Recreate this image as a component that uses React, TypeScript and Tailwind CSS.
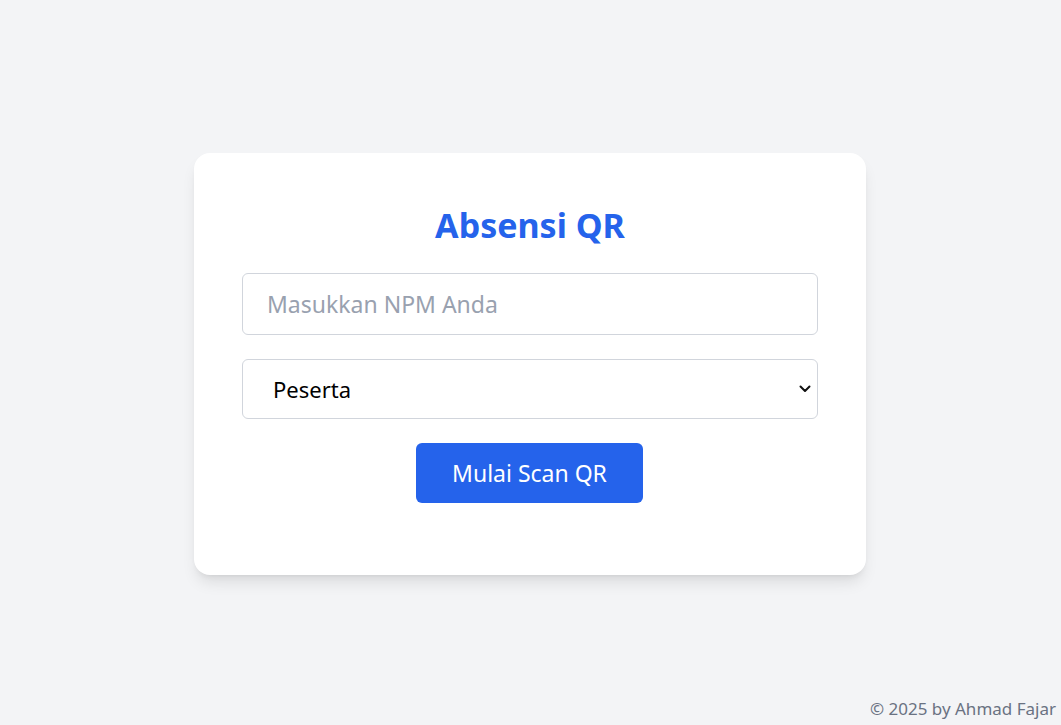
import React from "react";

function App() {
  return (
    <div className="relative min-h-screen bg-gray-100 flex items-center justify-center pt-[3px] pr-px font-['Noto_Sans',sans-serif]">
      <div className="w-[672px] bg-white rounded-2xl shadow-lg px-12 pt-12 pb-[72px] flex flex-col">
        <h1 className="text-[34px] font-bold text-[#2563eb] text-center leading-[40px] pt-1 mb-7">Absensi QR</h1>
        <input
          type="text"
          placeholder="Masukkan NPM Anda"
          className="w-full border border-gray-300 rounded-md px-6 h-[62px] text-[23px] placeholder:text-gray-400 outline-none"
        />
        <div className="relative mt-6">
          <select className="w-full appearance-none border border-gray-300 rounded-md h-[60px] pl-[30px] pr-8 text-[22px] text-black bg-white">
            <option>Peserta</option>
            <option>Panitia</option>
          </select>
          <svg
            className="absolute right-[7px] top-1/2 -translate-y-1/2 pointer-events-none"
            width="12"
            height="8"
            viewBox="0 0 12 8"
            fill="none"
          >
            <path d="M1.5 1.5 6 6l4.5-4.5" stroke="#111" strokeWidth="2" strokeLinecap="round" strokeLinejoin="round" />
          </svg>
        </div>
        <div className="mt-6 flex justify-center pr-px">
          <button className="w-[227px] h-[60px] bg-[#2563eb] text-white text-[23px] rounded-md">
            Mulai Scan QR
          </button>
        </div>
      </div>
      <footer className="absolute bottom-1 right-[5px] text-gray-500 text-[17px]">
        © 2025 by Ahmad Fajar
      </footer>
    </div>
  );
}

export default App;
